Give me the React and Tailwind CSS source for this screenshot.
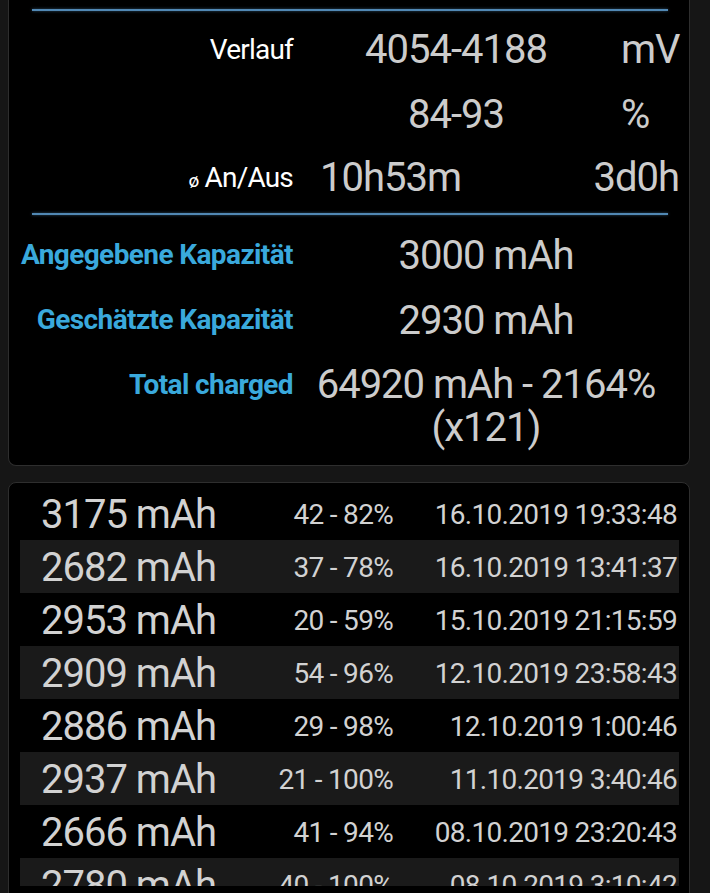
import React from 'react';

const history = [
  { mah: 3175, range: '42 - 82%', date: '16.10.2019 19:33:48' },
  { mah: 2682, range: '37 - 78%', date: '16.10.2019 13:41:37' },
  { mah: 2953, range: '20 - 59%', date: '15.10.2019 21:15:59' },
  { mah: 2909, range: '54 - 96%', date: '12.10.2019 23:58:43' },
  { mah: 2886, range: '29 - 98%', date: '12.10.2019 1:00:46' },
  { mah: 2937, range: '21 - 100%', date: '11.10.2019 3:40:46' },
  { mah: 2666, range: '41 - 94%', date: '08.10.2019 23:20:43' },
  { mah: 2780, range: '40 - 100%', date: '08.10.2019 3:10:42' },
];

const Divider = () => (
  <div className="ml-[23px] mr-[21px] h-[2px] bg-[#5188b4] shadow-[0_0_3px_rgba(81,136,180,0.6)]" />
);

const BlueRow = ({ label, children, className = '' }) => (
  <div className={`flex items-center ${className}`}>
    <div className="w-[284px] text-right text-[28px] font-bold text-[#3aa9dc] tracking-[-0.6px]">{label}</div>
    <div className="w-[386px] text-center text-[40px] text-[#cccccc] tracking-[-1px] leading-[43px]">{children}</div>
  </div>
);

const App = () => {
  return (
    <div className="h-[893px] overflow-hidden bg-[#161616] pl-2 pr-5 font-['Roboto',sans-serif]">
      {/* Zusammenfassung */}
      <div className="bg-black border border-t-0 border-[#2e2e2e] rounded-b-lg pt-[9px] pb-[16px]">
        <Divider />

        <div className="flex items-center h-[64px] mt-[7px]">
          <div className="w-[284px] text-right text-[28px] tracking-[-0.8px] text-white">Verlauf</div>
          <div className="w-[326px] text-center text-[40px] tracking-[-1px] text-[#cccccc]">4054-4188</div>
          <div className="ml-[2px] text-[40px] tracking-[-1px] text-[#cccccc]">mV</div>
        </div>

        <div className="flex items-center h-[65px]">
          <div className="w-[284px]" />
          <div className="w-[326px] text-center text-[40px] tracking-[-1px] text-[#cccccc]">84-93</div>
          <div className="ml-[2px] text-[40px] tracking-[-1px] text-[#cccccc]">%</div>
        </div>

        <div className="flex items-center h-[62px]">
          <div className="w-[284px] text-right text-[28px] tracking-[-0.8px] text-white">
            <span className="text-[19px] mr-[6px]">ø</span>An/Aus
          </div>
          <div className="ml-[27px] text-[40px] tracking-[-1px] text-[#cccccc]">10h53m</div>
          <div className="flex-1 pr-[10px] text-right text-[40px] tracking-[-1px] text-[#cccccc]">3d0h</div>
        </div>

        <div className="mt-[4px]">
          <Divider />
        </div>

        <BlueRow label="Angegebene Kapazität" className="h-[64px] mt-[8px]">3000 mAh</BlueRow>
        <BlueRow label="Geschätzte Kapazität" className="h-[66px]">2930 mAh</BlueRow>
        <div className="flex items-start mt-[10px]">
          <div className="w-[284px] h-[43px] flex items-center justify-end text-[28px] font-bold text-[#3aa9dc] tracking-[-0.6px]">Total charged</div>
          <div className="w-[386px] text-center text-[40px] text-[#cccccc] tracking-[-1px] leading-[43px]">64920 mAh - 2164% (x121)</div>
        </div>
      </div>

      {/* Ladeverlauf */}
      <div className="mt-[16px] bg-black border border-[#2e2e2e] rounded-lg pt-[4px] pl-[11px] pr-[10px] pb-4">
        <div className="h-[399px] overflow-hidden">
          {history.map((row, i) => (
            <div
              key={i}
              className={`flex items-center h-[53px] pt-[2px] ${i % 2 === 1 ? 'bg-[#1a1a1a]' : ''}`}
            >
              <div className="w-[250px] pl-[21px] text-[40px] tracking-[-1px] text-[#d2d2d2] whitespace-nowrap">{row.mah} mAh</div>
              <div className="w-[123px] text-right text-[28px] tracking-[-0.7px] text-[#d2d2d2] whitespace-nowrap">{row.range}</div>
              <div className="flex-1 pr-[2px] text-right text-[28px] tracking-[-0.7px] text-[#d2d2d2] whitespace-nowrap">{row.date}</div>
            </div>
          ))}
        </div>
      </div>
    </div>
  );
};

export default App;
